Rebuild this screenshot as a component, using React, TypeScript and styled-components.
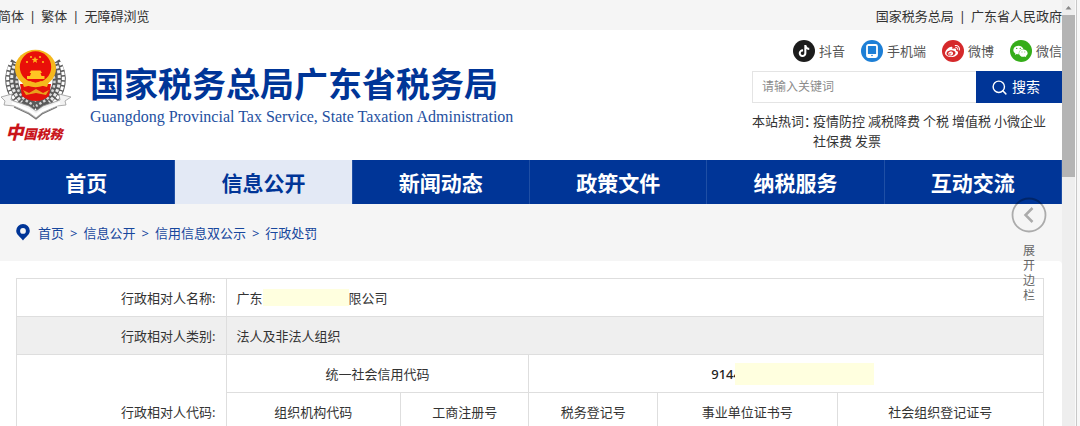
import React from "react";
import styled, { createGlobalStyle, css } from "styled-components";
import { FaTiktok, FaWeibo, FaWeixin } from "react-icons/fa";
import { FiSearch } from "react-icons/fi";

const blue = "#003597";
const line = "#dedede";

const GlobalStyle = createGlobalStyle`
  *, *::before, *::after { box-sizing: border-box; }
  body {
    margin: 0;
    background: #fff;
    color: #333;
    font: 13px/20px "Noto Sans", "Noto Sans CJK SC", sans-serif;
  }
  a { color: inherit; text-decoration: none; }
  button, input { font: inherit; }
`;

const Shell = styled.div`
  display: flex;
  height: 100vh;
  overflow: hidden;
`;

const Page = styled.div`
  position: relative;
  flex: 1;
  min-width: 0;
  overflow: hidden;
  background: #f5f5f5;
`;

const ScrollTrack = styled.div`
  display: flex;
  flex-direction: column;
  flex: none;
  width: 18px;
  padding-right: 5px;
  background: linear-gradient(to right, #eee 13px, #fafafa 13px, #fafafa 14px, #c8c8c8 14px, #c8c8c8 15px, #f7f7f7 15px);
`;

const ScrollArrow = styled.svg`
  display: block;
  width: 13px;
  height: 15px;
`;

const ScrollThumb = styled.div`
  height: 38%;
  background: #b4b4b4;
`;

const TopBar = styled.div`
  display: flex;
  justify-content: space-between;
  height: 30px;
  padding-top: 6px;
  margin-left: -2px;
`;

const LinkList = styled.div`
  display: flex;
  gap: 5px;
`;

const Header = styled.header`
  display: flex;
  justify-content: space-between;
  height: 130px;
  background: #fff;
`;

const Brand = styled.a`
  display: flex;
  gap: 18px;
  padding-top: 18px;
`;

const Emblem = styled.div`
  display: flex;
  flex-direction: column;
  align-items: center;
  width: 72px;
`;

const EmblemArt = styled.svg`
  display: block;
  width: 72px;
  height: 73px;
`;

const EmblemName = styled.span`
  margin-right: 4px;
  color: #c9141b;
  font: italic 900 13px/20px "Noto Sans CJK SC", sans-serif;
  white-space: nowrap;
  &::first-letter { font-size: 18px; }
`;

const BrandText = styled.div`
  padding-top: 14px;
  white-space: nowrap;
`;

const Title = styled.h1`
  margin: 0;
  color: ${blue};
  font: 700 34px/42px "Noto Sans CJK SC", sans-serif;
`;

const Subtitle = styled.p`
  margin: 0;
  color: #24509f;
  font: 16px/26px "Liberation Serif", serif;
`;

const Tools = styled.div`
  width: 310px;
  padding-top: 10px;
`;

const Social = styled.div`
  display: flex;
  justify-content: flex-end;
  gap: 16px;
  color: #555;
`;

const SocialLink = styled.a`
  display: flex;
  align-items: center;
  gap: 4px;
  height: 22px;
`;

const Disc = styled.span<{ $color: string }>`
  display: flex;
  align-items: center;
  justify-content: center;
  width: 22px;
  height: 22px;
  border-radius: 50%;
  background: ${(p) => p.$color};
  color: #fff;
`;

const Search = styled.form`
  display: flex;
  height: 32px;
  margin: 9px 0 8px;
`;

const SearchBox = styled.input`
  flex: 1;
  min-width: 0;
  padding: 0 9px;
  border: 1px solid #e4e4e4;
  border-right: 0;
  border-radius: 0;
  background: #fff;
  font-size: 12px;
  outline: none;
  &::placeholder { color: #8c8c8c; opacity: 1; }
`;

const SearchButton = styled.button`
  display: flex;
  align-items: center;
  gap: 4px;
  width: 86px;
  padding: 0 0 0 15px;
  border: 0;
  background: ${blue};
  color: #fff;
  font-size: 14px;
`;

const Hot = styled.div`
  display: grid;
  grid-template-columns: 61px 1fr;
  white-space: nowrap;
`;

const HotWords = styled.div`
  display: flex;
  flex-wrap: wrap;
  column-gap: 3px;
`;

const Nav = styled.nav`
  display: grid;
  grid-template-columns: repeat(6, 1fr);
  height: 44px;
  margin-left: -2px;
`;

const NavLink = styled.a<{ $active?: boolean }>`
  display: flex;
  align-items: center;
  justify-content: center;
  padding-top: 2px;
  border-right: 1px solid #1f4fa5;
  background: ${blue};
  color: #fff;
  font-size: 21px;
  font-weight: 700;
  ${(p) => p.$active && css`
    background: #e3e9f5;
    color: ${blue};
  `}
`;

const Crumbs = styled.nav`
  display: flex;
  align-items: center;
  gap: 6px;
  height: 57px;
  padding-left: 16px;
  color: #17479d;
`;

const Pin = styled.svg`
  width: 14px;
  height: 18px;
  margin-right: 2px;
`;

const Card = styled.main`
  padding: 17px 18px 17px 16px;
  border-top-right-radius: 4px;
  background: #fff;
`;

const Table = styled.table`
  width: 100%;
  table-layout: fixed;
  border-collapse: collapse;
`;

const Row = styled.tr<{ $shaded?: boolean }>`
  height: 38px;
  background: ${(p) => (p.$shaded ? "#efefef" : "#fff")};
`;

const Label = styled.th`
  padding: 0 10px;
  border: 1px solid ${line};
  font-weight: 400;
  text-align: right;
`;

const Cell = styled.td<{ $center?: boolean }>`
  padding: 0 10px;
  border: 1px solid ${line};
  text-align: ${(p) => (p.$center ? "center" : "left")};
`;

const Name = styled.div`
  display: flex;
  align-items: center;
`;

const Mask = styled.span`
  width: 86px;
  height: 17px;
  background: #ffffdf;
`;

const Code = styled.div`
  position: relative;
  width: 150px;
  margin: 0 auto;
  color: #222;
  font-weight: 500;
  text-align: left;
  &::after {
    content: "";
    position: absolute;
    top: -1px;
    left: 24px;
    width: 139px;
    height: 22px;
    background: #ffffdf;
  }
`;

const SideToggle = styled.button`
  position: absolute;
  top: 197px;
  right: 15px;
  display: flex;
  flex-direction: column;
  align-items: center;
  gap: 10px;
  width: 36px;
  padding: 0;
  border: 0;
  background: none;
  color: #666;
  font-size: 12px;
  line-height: 15px;
`;

const ToggleIcon = styled.svg`
  display: block;
  width: 36px;
  height: 36px;
`;

const ToggleText = styled.span`
  width: 12px;
`;

const nav = ["首页", "信息公开", "新闻动态", "政策文件", "纳税服务", "互动交流"];
const crumbs = ["首页", "信息公开", "信用信息双公示", "行政处罚"];
const hotWords = ["疫情防控", "减税降费", "个税", "增值税", "小微企业", "社保费", "发票"];
const codeKinds = ["组织机构代码", "工商注册号", "税务登记号", "事业单位证书号", "社会组织登记证号"];
const columns = ["20.4%", "17%", "12.5%", "12.5%", "17.5%", "20.1%"];

const star = "M0-3.6 .9-1.2 3.4-1.1 1.4.5 2.1 2.9 0 1.5-2.1 2.9-1.4.5-3.4-1.1-.9-1.2Z";

const Wreath = () => (
  <g fill="none">
    <path d="M17 63C8 76 11 92 22 101L35 109" stroke="#5a5a5a" strokeWidth="13" />
    <path d="M11 62C5 77 7 93 18 103" stroke="#fff" strokeWidth="3" strokeDasharray="3.500 1.500" />
    <path d="M15 63C9 78 11 92 22 102" stroke="#e8e8e8" strokeWidth="3" strokeDasharray="3 1.800" strokeDashoffset="2" />
    <path d="M19 72C14 82 17 92 25 100L35 106" stroke="#d6d6d6" strokeWidth="2.500" strokeDasharray="2.500 2" />
  </g>
);

const EmblemDrawing = () => (
  <EmblemArt viewBox="0 48 72 73" aria-hidden="true">
    <Wreath />
    <g transform="matrix(-1 0 0 1 71 0)"><Wreath /></g>
    <path d="M20 84H51L49 96Q43 101 36 101 28 101 22 96Z" fill="#e3120b" />
    <path d="M23 90 29 93 36 89 43 93 49 90 46 95 36 93 26 95Z" fill="#e8a11c" />
    <ellipse cx="35.500" cy="68.500" rx="20.500" ry="18.800" fill="#f5b81c" />
    <circle cx="35.500" cy="67" r="15.700" fill="#e90f09" />
    <path d="M21 79Q27 83 30 81L35.500 83 41 81Q44 83 50 79L47 87 36 84 24 87Z" fill="#f5b81c" />
    <path d="M27 79V76H30L31 73H29.500L31 70.500H40.500L42 73H40.500L41.500 76H44.500V79Z" fill="#ffc423" />
    <path d={star} transform="translate(35 60)" fill="#ffb81c" />
    {[[27, 62], [31, 57], [40, 57], [43, 62]].map(([x, y]) => (
      <circle key={`${x}-${y}`} cx={x} cy={y} r="1.100" fill="#ffb81c" />
    ))}
    <path d="M1 97 12 94 11 100 29 106 36 111 43 106 60 100 59 94 71 97 65 101 66 105 57 106 42 113 36 118 29 113 14 106 4 105 5 101Z" fill="#f2f2f2" stroke="#999" strokeWidth=".8" />
    <path d="M12 103 29 110 36 115 43 110 60 103" fill="none" stroke="#fff" strokeWidth="2.500" />
    <path d="M14 107 29 114 36 119 42 114 57 107" fill="none" stroke="#777" strokeWidth="1.200" />
  </EmblemArt>
);

const TabletIcon = () => (
  <svg width="12" height="14" viewBox="0 0 12 14" aria-hidden="true">
    <rect x="1" y="1" width="10" height="12" rx="1.500" fill="none" stroke="#fff" strokeWidth="1.800" />
    <path d="M1 10H11V13H1Z" fill="#fff" />
    <circle cx="6" cy="11.500" r=".8" fill="#1d7fd6" />
  </svg>
);

const social = [
  { name: "抖音", color: "#1c1c1c", icon: <FaTiktok size={12} /> },
  { name: "手机端", color: "#1d7fd6", icon: <TabletIcon /> },
  { name: "微博", color: "#d5292b", icon: <FaWeibo size={15} /> },
  { name: "微信", color: "#35ad19", icon: <FaWeixin size={15} /> },
];

export default function App() {
  return (
    <Shell>
      <GlobalStyle />
      <Page>
        <TopBar>
          <LinkList>
            <a href="#jian">简体</a><span>|</span>
            <a href="#fan">繁体</a><span>|</span>
            <a href="#access">无障碍浏览</a>
          </LinkList>
          <LinkList>
            <a href="#sta">国家税务总局</a><span>|</span>
            <a href="#gov">广东省人民政府</a>
          </LinkList>
        </TopBar>
        <Header>
          <Brand href="#home">
            <Emblem>
              <EmblemDrawing />
              <EmblemName as="div">中国税務</EmblemName>
            </Emblem>
            <BrandText>
              <Title>国家税务总局广东省税务局</Title>
              <Subtitle>Guangdong Provincial Tax Service, State Taxation Administration</Subtitle>
            </BrandText>
          </Brand>
          <Tools>
            <Social>
              {social.map((s) => (
                <SocialLink key={s.name} href="#social">
                  <Disc $color={s.color}>{s.icon}</Disc>
                  {s.name}
                </SocialLink>
              ))}
            </Social>
            <Search>
              <SearchBox type="text" placeholder="请输入关键词" aria-label="请输入关键词" />
              <SearchButton type="button">
                <FiSearch size={17} />
                搜索
              </SearchButton>
            </Search>
            <Hot>
              <span>本站热词：</span>
              <HotWords>
                {hotWords.map((w) => <a key={w} href="#hot">{w}</a>)}
              </HotWords>
            </Hot>
          </Tools>
        </Header>
        <Nav>
          {nav.map((n) => (
            <NavLink key={n} href="#nav" $active={n === "信息公开"}>{n}</NavLink>
          ))}
        </Nav>
        <Crumbs>
          <Pin viewBox="0 0 14 18" aria-hidden="true">
            <path fillRule="evenodd" fill={blue} d="M7 0a6.800 6.800 0 0 1 6.800 6.800C13.800 11 9.500 13 7 16.500 4.500 13 .2 11 .2 6.800A6.800 6.800 0 0 1 7 0Zm0 4a2.900 2.900 0 1 0 0 5.800A2.900 2.900 0 0 0 7 4Z" />
          </Pin>
          {crumbs.map((c, i) => (
            <React.Fragment key={c}>
              {i > 0 && <span>&gt;</span>}
              <a href="#crumb">{c}</a>
            </React.Fragment>
          ))}
        </Crumbs>
        <Card>
          <Table>
            <colgroup>
              {columns.map((w, i) => <col key={i} width={w} />)}
            </colgroup>
            <tbody>
              <Row>
                <Label scope="row">行政相对人名称:</Label>
                <Cell colSpan={5}><Name>广东<Mask />限公司</Name></Cell>
              </Row>
              <Row $shaded>
                <Label scope="row">行政相对人类别:</Label>
                <Cell colSpan={5}>法人及非法人组织</Cell>
              </Row>
              <Row>
                <Label scope="row" rowSpan={3}>行政相对人代码:</Label>
                <Cell colSpan={2} $center>统一社会信用代码</Cell>
                <Cell colSpan={3} $center><Code>9144</Code></Cell>
              </Row>
              <Row>
                {codeKinds.map((k) => <Cell key={k} $center>{k}</Cell>)}
              </Row>
              <Row>
                {codeKinds.map((k) => <Cell key={k} />)}
              </Row>
            </tbody>
          </Table>
        </Card>
        <SideToggle type="button">
          <ToggleIcon viewBox="0 0 36 36" fill="none" stroke="#000" strokeOpacity=".3" aria-hidden="true">
            <circle cx="18" cy="18" r="16.500" strokeWidth="1.800" />
            <path d="M21.500 11 14.500 18 21.500 25" strokeWidth="2.500" />
          </ToggleIcon>
          <ToggleText>展开边栏</ToggleText>
        </SideToggle>
      </Page>
      <ScrollTrack>
        <ScrollArrow viewBox="0 0 13 15" aria-hidden="true">
          <path d="M3.500 9.500H9.500L6.500 6Z" fill="#888" />
        </ScrollArrow>
        <ScrollThumb />
      </ScrollTrack>
    </Shell>
  );
}
